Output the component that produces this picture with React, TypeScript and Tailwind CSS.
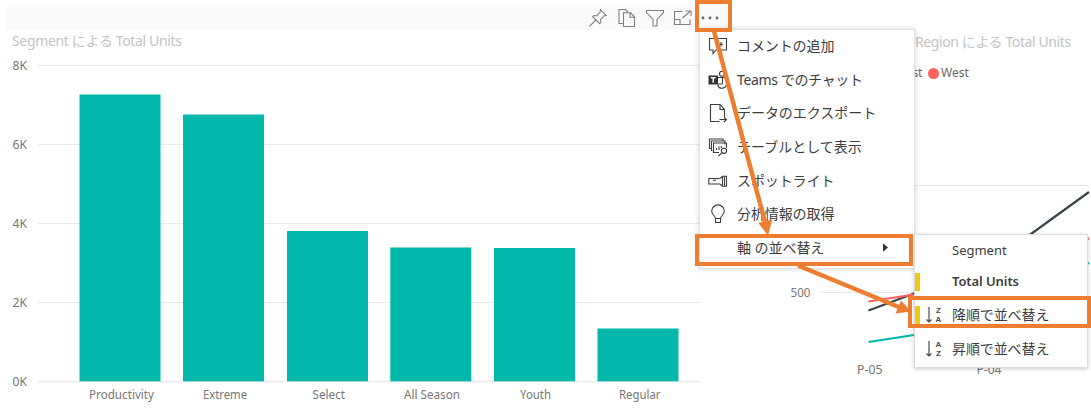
import type { ReactNode } from 'react';

const bars = [
  { name: 'Productivity', x: 79.5, top: 94.5, tx: 89, tw: 65 },
  { name: 'Extreme', x: 183, top: 114.5, tx: 203, tw: 44 },
  { name: 'Select', x: 287, top: 231, tx: 312.5, tw: 32.5 },
  { name: 'All Season', x: 390.3, top: 247.5, tx: 404, tw: 56 },
  { name: 'Youth', x: 494, top: 248, tx: 520, tw: 31 },
  { name: 'Regular', x: 597.5, top: 328.5, tx: 619, tw: 41.5 },
];
const ticks = [
  { label: '8K', y: 65.5 },
  { label: '6K', y: 144.5 },
  { label: '4K', y: 223.5 },
  { label: '2K', y: 302.5 },
  { label: '0K', y: 381.5 },
];

function Icon({ children, className = 'w-5 h-5' }: { children: ReactNode; className?: string }) {
  return (
    <svg viewBox="0 0 20 20" className={`${className} shrink-0`} fill="none" stroke="currentColor" strokeWidth="1.1">
      {children}
    </svg>
  );
}

function BarChart() {
  return (
    <svg width="700" height="360" viewBox="0 54 700 360" className="block" fontSize="12" fill="#777777">
      {ticks.map((t) => (
        <g key={t.label}>
          <line x1="38" x2="700" y1={t.y} y2={t.y} stroke="#ebebeb" strokeWidth={t.label === '0K' ? 1.5 : 1} />
          <text x="12.5" y={t.y + 4} textLength="14.5" lengthAdjust="spacingAndGlyphs">{t.label}</text>
        </g>
      ))}
      {bars.map((b) => (
        <g key={b.name}>
          <rect x={b.x} y={b.top} width="81" height={381.3 - b.top} fill="#01b8aa" />
          <text x={b.tx} y="399" textLength={b.tw} lengthAdjust="spacingAndGlyphs">{b.name}</text>
        </g>
      ))}
    </svg>
  );
}

function LineChart() {
  return (
    <svg width="391" height="330" viewBox="700 84 391 330" className="block" fontSize="12" fill="#777777">
      <path d="M821 185.5H1088M821 292.5H1088" stroke="#e8e8e8" />
      <g fill="none" strokeWidth="2.2">
        <path d="M868.5 310.5 914 293.5 1031 234 1089 192" stroke="#374649" />
        <path d="M868.5 301.5 914 294.5 1084 240 1089 238.5" stroke="#fd625e" />
        <path d="M868.5 342 914 335 1084 265 1089 263" stroke="#01b8aa" />
      </g>
      <text x="790.5" y="297" textLength="20" lengthAdjust="spacingAndGlyphs">500</text>
      <text x="857" y="374" textLength="25.5" lengthAdjust="spacingAndGlyphs">P-05</text>
      <text x="976.5" y="374" textLength="25" lengthAdjust="spacingAndGlyphs">P-04</text>
    </svg>
  );
}

function Toolbar() {
  return (
    <div className="ml-[7px] mt-[7px] flex h-[23px] w-[725px] items-center bg-[#fafafa] pb-px pl-[581px] text-[#808080]">
      <Icon className="h-5 w-5">
        <path d="m12.500 1.800 5.700 5.600-2.300.5-3.300 3.500.2 3-1.300 1.100L4.700 8.700l1.200-1.200 3.100.2L12 4.300zM7.900 12 1.500 18.300" />
      </Icon>
      <Icon className="ml-[9px] h-5 w-5">
        <path d="M6.500 15.500H2V1.500h6.500L11 4M6.500 4.800h7l4 4v9.700h-11zM13 5v4.300h4.500" />
      </Icon>
      <Icon className="ml-2 h-5 w-5">
        <path d="M1.500 2.500h17v2L12 11.500V18H8v-6.500L1.500 4.500z" />
      </Icon>
      <Icon className="ml-2 h-5 w-5">
        <path d="M9.500 3.500h-8v13H17v-5M1.500 11.500H7v5M9.500 10l7.500-6.500M12.500 3H18v5" />
      </Icon>
      <svg viewBox="0 0 18 4" className="ml-2 h-1 w-[18px]" fill="#666666">
        <circle cx="2" cy="2" r="1.400" /><circle cx="9" cy="2" r="1.400" /><circle cx="16" cy="2" r="1.400" />
      </svg>
    </div>
  );
}

const menuItems: { label: string; cls: string; icon?: ReactNode }[] = [
  {
    label: 'コメントの追加', cls: 'tracking-[-0.1px]',
    icon: <><path d="M1.500 2.500h17v11.500H8L5 17.500V14H1.500z" /><path d="M13 6v4.500M10.800 8.200h4.500" /></>,
  },
  {
    label: 'Teams でのチャット', cls: 'tracking-[-0.35px]',
    icon: <>
      <circle cx="14" cy="3.800" r="2.500" /><path d="M10 7.500h8.500v6a4.500 4.500 0 0 1-8.800 1.500M14.500 7.500v6.500H10" />
      <rect x="0.500" y="5.500" width="9.500" height="9" fill="#333333" stroke="none" />
      <path d="M2.700 7.700h5M5.200 7.700v5" stroke="#ffffff" strokeWidth="1.400" />
    </>,
  },
  {
    label: 'データのエクスポート', cls: 'tracking-[-0.05px]',
    icon: <path d="M11.500 18.500H2.500v-17h9.500l4.500 5v7.500M12 1.500v5h4.500M11.500 16.500h7M16 14l2.500 2.500-2.500 2.500" />,
  },
  {
    label: 'テーブルとして表示', cls: 'tracking-[0px]',
    icon: <>
      <path d="M3 11.500H1.500v-9.500H15V4M4.500 13.500H3.500v-9.500H17V7.500M11 15.500H5.500v-9.500h13V11M8.500 13v-2M11 13V9.500M13.300 11V9" />
      <circle cx="16" cy="13.800" r="2.600" /><path d="m14.100 15.600-3.600 3.400" />
    </>,
  },
  {
    label: 'スポットライト', cls: 'tracking-[-0.1px]',
    icon: <path d="M0.800 7.500H12l2.500-2.300h4v10h-4L12 13H0.800zM14.500 5.200v10M16.500 5.200v10M5 9.300h3" />,
  },
  {
    label: '分析情報の取得', cls: 'tracking-[-0.1px]',
    icon: <path d="M7.500 14.500c0-2.500-3.800-3.800-3.800-7.300a6.300 6.300 0 0 1 12.600 0c0 3.500-3.800 4.800-3.800 7.300zM7.500 14.500V18.500h5v-4" />,
  },
  { label: '軸 の並べ替え', cls: 'tracking-[-0.05px]' },
];

function ContextMenu() {
  return (
    <div className="absolute left-[699px] top-[29px] flex h-[240px] w-[216px] flex-col border border-[#e1e1e1] bg-white text-sm text-[#3d3d3d] shadow-[0_0_5px_rgba(0,0,0,0.18)]">
      {menuItems.map((m) => (
        <div key={m.label} className="flex h-[33.7px] items-center pb-[2px] pl-2 pr-[26px]">
          <div className="w-[29px]">{m.icon && <Icon>{m.icon}</Icon>}</div>
          <span className={`whitespace-nowrap leading-5 ${m.cls}`}>{m.label}</span>
          {!m.icon && (
            <svg viewBox="0 0 6 10" className="ml-auto h-[9px] w-[5px]" fill="#333333"><path d="M0 0 6 5 0 10z" /></svg>
          )}
        </div>
      ))}
    </div>
  );
}

function SortIcon({ top, bottom }: { top: string; bottom: string }) {
  return (
    <div className="flex h-[18px] items-center text-[#4a4a4a]">
      <svg viewBox="0 0 8 18" className="h-[18px] w-2" fill="none" stroke="currentColor" strokeWidth="1.200">
        <path d="M4 1v15M1.500 13.500 4 16l2.500-2.500" />
      </svg>
      <div className="ml-[2px] w-[7px] text-center font-['Liberation_Sans',sans-serif] text-[8px] font-bold leading-[9px]">
        <div>{top}</div>
        <div>{bottom}</div>
      </div>
    </div>
  );
}

function SortMenu() {
  return (
    <div className="absolute left-[914px] top-[234px] flex h-[134px] w-[174px] flex-col border border-[#dcdcdc] bg-white text-sm text-[#3d3d3d] shadow-[0_1px_4px_rgba(0,0,0,0.2)]">
      <div className="flex h-[31px] items-center pb-px pl-[37px] text-[13px]">Segment</div>
      <div className="flex h-[31px] items-center">
        <div className="h-[18px] w-[5px] bg-[#f2c811]" />
        <span className="ml-8 text-[13px] font-semibold tracking-[-0.08px]">Total Units</span>
      </div>
      <div className="flex h-[35px] items-center">
        <div className="h-[18px] w-[5px] bg-[#f2c811]" />
        <div className="ml-[5px] w-[27px]"><SortIcon top="Z" bottom="A" /></div>
        <span className="tracking-[-0.1px]">降順で並べ替え</span>
      </div>
      <div className="flex h-[33px] items-center pl-[10px]">
        <div className="w-[27px]"><SortIcon top="A" bottom="Z" /></div>
        <span className="tracking-[-0.1px]">昇順で並べ替え</span>
      </div>
    </div>
  );
}

function Annotations() {
  return (
    <svg width="1091" height="414" className="pointer-events-none absolute left-0 top-0" fill="none" stroke="#ed7d31">
      <g strokeWidth="4">
        <rect x="697" y="2" width="33" height="28" />
        <rect x="697" y="236" width="214" height="28" />
        <rect x="910" y="298" width="179" height="28" />
      </g>
      <path d="M714 31 765.500 224M798 265.500 900 307.500" strokeWidth="4.500" />
      <path d="M768 235.500 758.300 223 772.300 219.500zM911 311.500 895.500 313.500 901 300.500z" fill="#ed7d31" stroke="none" />
    </svg>
  );
}

export default function App() {
  return (
    <main className="relative h-[414px] w-[1091px] overflow-hidden bg-white font-['Noto_Sans','Noto_Sans_CJK_JP',sans-serif]">
      <div className="flex">
        <section className="w-[700px] shrink-0">
          <Toolbar />
          <h2 className="flex h-6 items-center whitespace-pre pb-[3px] pl-3 text-sm leading-5 tracking-[-0.34px] text-[#c4c4c4]">Segment による Total Units</h2>
          <BarChart />
        </section>
        <section className="w-[391px] shrink-0 pt-[32px]">
          <h2 className="flex h-5 items-center whitespace-pre pl-[215px] text-sm leading-5 tracking-[-0.4px] text-[#c4c4c4]">Region による Total Units</h2>
          <div className="flex h-8 items-center pt-[10px] pl-[197px] text-xs text-[#666666]">
            <span className="w-[25px] text-right tracking-[-0.3px]">East</span>
            <span className="ml-[6px] mr-[2px] h-[11px] w-[11px] rounded-full bg-[#fd625e]" />
            <span>West</span>
          </div>
          <LineChart />
        </section>
      </div>
      <ContextMenu />
      <SortMenu />
      <Annotations />
    </main>
  );
}
